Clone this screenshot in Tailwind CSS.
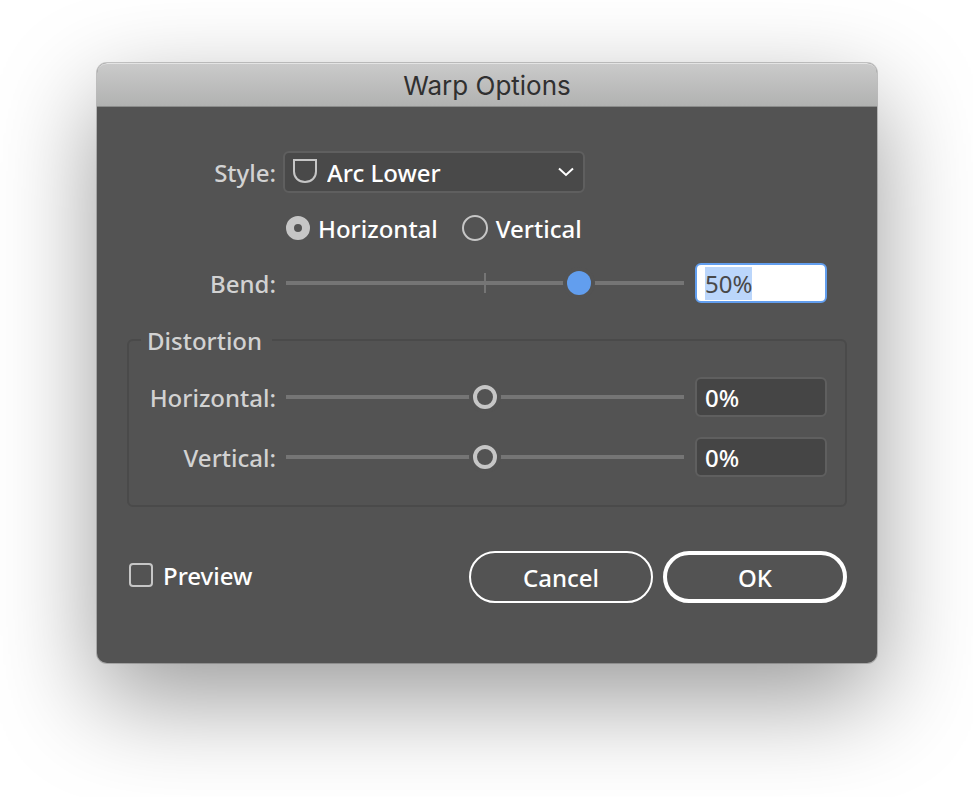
<!DOCTYPE html>
<html lang="en">
<head>
    <meta charset="UTF-8">
    <meta name="viewport" content="width=device-width, initial-scale=1.0">
    <title>Warp Options</title>
    <script src="https://cdn.jsdelivr.net/npm/@tailwindcss/browser@4"></script>
</head>
<body class="bg-white min-h-screen pt-[63px] pl-[97px] pr-24 font-['Noto_Sans',sans-serif] text-2xl font-medium text-white">
    <div role="dialog" aria-labelledby="title" class="w-full rounded-[10px] bg-[#535353] shadow-[0_0_0_1px_rgba(0,0,0,0.2),0_36px_100px_rgba(0,0,0,0.4)]">
        <!-- Title bar -->
        <header class="flex h-11 items-center justify-center rounded-t-[10px] border-t border-b border-t-[#e4e4e4] border-b-[#8b8c8b] bg-linear-to-b from-[#cacaca] to-[#b1b2b1]">
            <h1 id="title" class="pt-0.5 font-['Inter',sans-serif] text-[26px] leading-8 font-normal text-[#303030]">Warp Options</h1>
        </header>

        <form class="px-[30px] pt-11 pb-[60px]" onsubmit="return false">
            <!-- Style -->
            <div class="flex items-center gap-[7px]">
                <label for="style" class="w-[149px] pt-0.5 text-right text-[#d2d2d2]">Style:</label>
                <div class="relative w-[302px]">
                    <select id="style" class="block h-[42px] w-full appearance-none rounded-md border-2 border-[#5f5f5f] bg-[#494949] pt-0.5 pl-[42px] pr-10 leading-8 outline-none">
                        <option>Arc Lower</option>
                    </select>
                    <svg class="pointer-events-none absolute top-2 left-2.5 size-6" viewBox="0 0 24 24" fill="none" stroke="#c6c6c6" stroke-width="2">
                        <path d="M1 1h22v11.5C23 18.5 18.5 23 12 23S1 18.5 1 12.500Z"/>
                    </svg>
                    <svg class="pointer-events-none absolute top-4 right-[11px] h-2.5 w-4" viewBox="0 0 16 10" fill="none" stroke="#fff" stroke-width="2">
                        <path d="M1 1.500l7 6.500l7-6.500"/>
                    </svg>
                </div>
            </div>

            <!-- Direction -->
            <div class="mt-[22px] flex h-[26px] items-center gap-6 pl-[159px]">
                <label class="flex items-center gap-2 leading-8">
                    <input type="radio" name="direction" checked class="size-6 appearance-none rounded-full border-2 border-[#c6c6c6] checked:border-8">
                    <span class="pt-0.5">Horizontal</span>
                </label>
                <label class="flex items-center gap-2 leading-8">
                    <input type="radio" name="direction" class="size-[26px] appearance-none rounded-full border-2 border-[#c6c6c6] checked:border-8">
                    <span class="pt-0.5">Vertical</span>
                </label>
            </div>

            <!-- Bend -->
            <div class="mt-[22px] flex items-center gap-2.5 pr-5">
                <label for="bend" class="w-[149px] pt-0.5 text-right text-[#d2d2d2]">Bend:</label>
                <input id="bend" type="range" min="-100" max="100" value="50" class="h-6 min-w-0 flex-1 appearance-none bg-[linear-gradient(#757575,#757575)] bg-[size:2px_20px] bg-center bg-no-repeat outline-none [&::-webkit-slider-runnable-track]:h-1 [&::-webkit-slider-runnable-track]:bg-[#757575] [&::-webkit-slider-thumb]:-mt-2.5 [&::-webkit-slider-thumb]:size-6 [&::-webkit-slider-thumb]:appearance-none [&::-webkit-slider-thumb]:rounded-full [&::-webkit-slider-thumb]:bg-[#629eee] [&::-webkit-slider-thumb]:shadow-[0_0_0_4px_#535353]">
                <input id="bend-value" type="text" value="50%" aria-label="Bend value" class="ml-px h-10 w-[132px] rounded-md border-2 border-[#629eee] bg-white px-2 font-normal text-[#494949] outline-none selection:bg-[#bbd6fb] selection:text-[#494949]">
            </div>

            <!-- Distortion -->
            <fieldset class="mt-[21px] rounded-md border-2 border-[#4a4a4a] pr-[18px] pb-7 pl-3">
                <legend class="pt-0.5 pr-2.5 pl-1.5 leading-[30px] text-[#d2d2d2]">Distortion</legend>
                <div class="mt-[21px] flex items-center gap-2.5">
                    <label for="distort-h" class="w-[135px] pt-0.5 text-right text-[#d2d2d2]">Horizontal:</label>
                    <input id="distort-h" type="range" min="-100" max="100" value="0" class="h-6 min-w-0 flex-1 appearance-none bg-transparent outline-none [&::-webkit-slider-runnable-track]:h-1 [&::-webkit-slider-runnable-track]:bg-[#757575] [&::-webkit-slider-thumb]:-mt-2.5 [&::-webkit-slider-thumb]:size-6 [&::-webkit-slider-thumb]:appearance-none [&::-webkit-slider-thumb]:rounded-full [&::-webkit-slider-thumb]:border-4 [&::-webkit-slider-thumb]:border-[#c6c6c6] [&::-webkit-slider-thumb]:bg-[#535353] [&::-webkit-slider-thumb]:shadow-[0_0_0_4px_#535353]">
                    <input type="text" value="0%" aria-label="Horizontal value" class="ml-px h-10 w-[132px] rounded-md border-2 border-[#5f5f5f] bg-[#454545] px-2 outline-none">
                </div>
                <div class="mt-5 flex items-center gap-2.5">
                    <label for="distort-v" class="w-[135px] pt-0.5 text-right text-[#d2d2d2]">Vertical:</label>
                    <input id="distort-v" type="range" min="-100" max="100" value="0" class="h-6 min-w-0 flex-1 appearance-none bg-transparent outline-none [&::-webkit-slider-runnable-track]:h-1 [&::-webkit-slider-runnable-track]:bg-[#757575] [&::-webkit-slider-thumb]:-mt-2.5 [&::-webkit-slider-thumb]:size-6 [&::-webkit-slider-thumb]:appearance-none [&::-webkit-slider-thumb]:rounded-full [&::-webkit-slider-thumb]:border-4 [&::-webkit-slider-thumb]:border-[#c6c6c6] [&::-webkit-slider-thumb]:bg-[#535353] [&::-webkit-slider-thumb]:shadow-[0_0_0_4px_#535353]">
                    <input type="text" value="0%" aria-label="Vertical value" class="ml-px h-10 w-[132px] rounded-md border-2 border-[#5f5f5f] bg-[#454545] px-2 outline-none">
                </div>
            </fieldset>

            <!-- Buttons -->
            <div class="mt-11 flex items-center gap-2.5">
                <label class="mr-auto flex items-center gap-2.5 pb-1 pl-0.5 leading-8">
                    <input type="checkbox" class="size-6 appearance-none rounded-[4px] border-2 border-[#c6c6c6] checked:bg-[#c6c6c6]">
                    <span class="pt-0.5">Preview</span>
                </label>
                <button type="button" class="h-[52px] w-[184px] rounded-full border-2 border-white pt-0.5">Cancel</button>
                <button type="submit" class="h-[52px] w-[184px] rounded-full border-4 border-white pt-0.5">OK</button>
            </div>
        </form>
    </div>

    <script>
        // Start with the bend value selected, ready to be typed over
        const bend = document.getElementById('bend');
        const bendValue = document.getElementById('bend-value');
        bend.addEventListener('input', () => {
            bendValue.value = bend.value + '%';
        });
        bendValue.focus();
        bendValue.select();
    </script>
</body>
</html>
